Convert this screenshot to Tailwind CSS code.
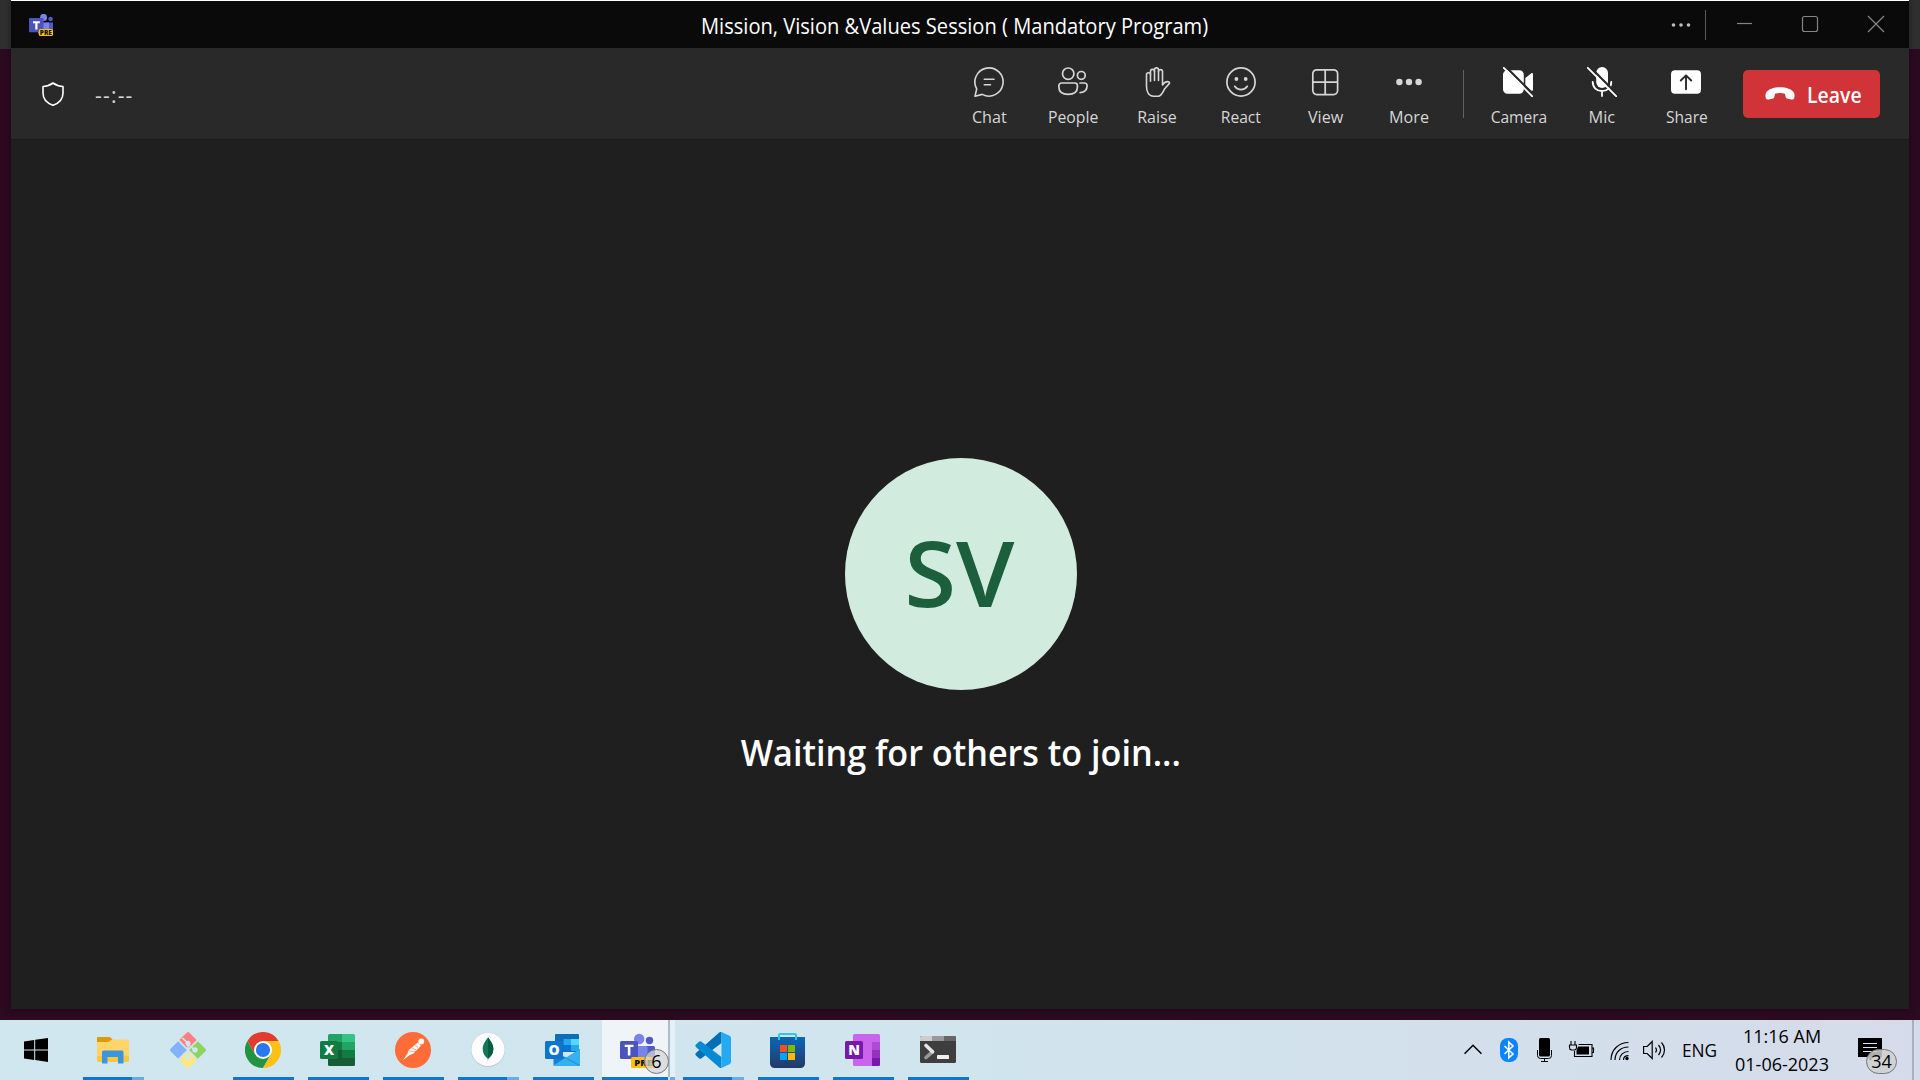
<!DOCTYPE html>
<html lang="en">
<head>
<meta charset="utf-8">
<title>Mission, Vision &amp;Values Session ( Mandatory Program)</title>
<script src="https://cdn.jsdelivr.net/npm/@tailwindcss/browser@4"></script>
</head>
<body class="w-[1920px] h-[1080px] overflow-hidden bg-[#2c0a20] font-['Open_Sans','Noto_Sans',sans-serif] flex flex-col">

<!-- Desktop area with the meeting window -->
<div class="h-[1020px] px-[11px] pb-[11px] shrink-0 bg-linear-to-b from-[#303030] from-[49px] to-[#2c0a20] to-[49px]">
  <main class="h-[1009px] bg-[#1f1f1f] border-t border-white flex flex-col shadow-[0_0_8px_rgba(0,0,0,0.4)]">

    <!-- Title bar -->
    <header class="h-[47px] shrink-0 bg-[#0a0a0a] flex text-white">
      <svg class="w-6 h-[22px] ml-[18px] mt-[13px]" viewBox="0 0 24 22">
        <circle cx="14.6" cy="3.4" r="3.5" fill="#7b83eb"/><circle cx="21.6" cy="5" r="2.3" fill="#5059c9"/>
        <path d="M17 8.5h7v9h-7z" fill="#5059c9"/><path d="M9 8.5h11v11H9z" fill="#7b83eb"/>
        <rect y="4" width="14.5" height="14.3" rx="1" fill="#4b53bc"/>
        <path d="M4 7.2h6.8v2H8.5v6.3H6.3V9.200H4z" fill="#fff"/>
        <rect x="9.800" y="15" width="14.200" height="7" rx="1.500" fill="#ffc200"/>
        <text x="16.900" y="20.900" text-anchor="middle" font-family="Open Sans" font-size="6.500" font-weight="800" fill="#111">PRE</text>
      </svg>
      <h1 class="ml-[648px] pt-0.5 text-[21px] leading-[46px] whitespace-nowrap origin-left scale-x-[0.957]">Mission, Vision &amp;Values Session ( Mandatory Program)</h1>
      <div class="ml-auto flex">
        <svg class="w-[50px] h-[47px] border-box" viewBox="0 0 50 47" fill="#bdbdbd"><circle cx="15.500" cy="24" r="1.800"/><circle cx="23" cy="24" r="1.800"/><circle cx="30.500" cy="24" r="1.800"/><path d="M47 9h1v30h-1z" fill="#5a5a5a"/></svg>
        <svg class="w-[201px] h-[47px]" viewBox="1708 1 201 47" fill="none" stroke="#858585" stroke-width="1.200"><path d="M1737 23.500h15"/><rect x="1802.500" y="16.500" width="15" height="15" rx="2"/><path d="M1868 16l16 16m0-16l-16 16"/></svg>
      </div>
    </header>

    <!-- Meeting toolbar -->
    <nav class="h-[91px] shrink-0 bg-[#292929] flex text-[#d6d6d6]">
      <svg class="w-[22px] h-6 ml-[31px] mt-[34px]" viewBox="0 0 22 24" fill="none" stroke="#fff" stroke-width="1.600" stroke-linejoin="round"><path d="M11 1C8 3.300 4.800 4.300 1 4.500V11c0 6 3.500 10 10 12.300C17.500 21 21 17 21 11V4.500C17.200 4.300 14 3.300 11 1z"/></svg>
      <span class="ml-[31px] mt-[31px] text-[21px] leading-8 tracking-[1.2px]">--:--</span>

      <div class="ml-auto flex text-[17px] leading-6">
        <button class="w-[84px] pt-[19px] flex flex-col items-center">
          <svg class="w-[30px] h-[30px]" viewBox="0 0 30 30" fill="none" stroke="currentColor" stroke-width="1.600" stroke-linecap="round" stroke-linejoin="round"><path d="M8.300 27.400L1 29.200l1.700-7.300A14.100 14.100 0 1 1 8.300 27.400z"/><path d="M10.300 12.200h9.700M10.300 17.800h6.200"/></svg>
          <span class="mt-2 scale-x-[0.95]">Chat</span></button>
        <button class="w-[84px] pt-[19px] flex flex-col items-center">
          <svg class="w-[30px] h-[30px]" viewBox="0 0 30 30" fill="none" stroke="currentColor" stroke-width="1.700" stroke-linecap="round"><circle cx="10.200" cy="6.700" r="5.700"/><circle cx="23.300" cy="8.400" r="3.900"/><path d="M3.500 16h13.300a2.600 2.600 0 0 1 2.600 2.600v1.400c0 5-4 7.300-9.200 7.300S.9 25 .9 20v-1.400A2.600 2.600 0 0 1 3.500 16zM22 16h4.500a2.600 2.600 0 0 1 2.600 2.600c0 4.700-3 7-7 7"/></svg>
          <span class="mt-2 scale-x-[0.93]">People</span></button>
        <button class="w-[84px] pt-[19px] flex flex-col items-center">
          <svg class="w-[30px] h-[30px]" viewBox="0 0 30 30" fill="none" stroke="currentColor" stroke-width="1.600" stroke-linecap="round" stroke-linejoin="round"><path d="M4.500 19V7.800a2 2 0 0 1 4 0V4.400a2 2 0 0 1 4 0V2.900a2 2 0 0 1 4 0v1.700a2 2 0 0 1 4 0V18c1.500-2.500 3.500-3.600 6-3.300.9.200 1.200 1 .9 1.700l-4.700 5.300c-2 3.900-3.200 7.500-6.500 7.500H11.500C6.500 29.200 4.500 24.500 4.500 19z"/><path d="M8.500 7.800v6.500M12.500 4.400v9M16.500 4.400v9"/></svg>
          <span class="mt-2 scale-x-[0.94]">Raise</span></button>
        <button class="w-[84px] pt-[19px] flex flex-col items-center">
          <svg class="w-[30px] h-[30px]" viewBox="0 0 30 30" fill="none" stroke="currentColor" stroke-width="1.700" stroke-linecap="round"><circle cx="15" cy="15" r="14.100"/><path d="M8.700 19.300c3.200 4.500 9.400 4.500 12.600 0"/><circle cx="10.400" cy="12" r="1.900" fill="currentColor" stroke="none"/><circle cx="19.700" cy="12" r="1.900" fill="currentColor" stroke="none"/></svg>
          <span class="mt-2 scale-x-[0.92]">React</span></button>
        <button class="w-[84px] pt-[19px] flex flex-col items-center">
          <svg class="w-[30px] h-[30px]" viewBox="0 0 30 30" fill="none" stroke="currentColor" stroke-width="1.700"><rect x="2.800" y="2.800" width="24.800" height="24.800" rx="4"/><path d="M15.200 2.800v24.800M2.800 15.200h24.800"/></svg>
          <span class="mt-2 ml-px scale-x-[0.95]">View</span></button>
        <button class="w-[84px] pt-[19px] flex flex-col items-center">
          <svg class="w-[30px] h-[30px]" viewBox="0 0 30 30" fill="currentColor"><circle cx="5.400" cy="15" r="3.200"/><circle cx="15" cy="15" r="3.200"/><circle cx="24.600" cy="15" r="3.200"/></svg>
          <span class="mt-2 scale-x-[0.95]">More</span></button>
        <div class="w-px h-12 mt-[22px] ml-3 mr-3 bg-[#616161]"></div>
        <button class="w-[84px] pt-[19px] flex flex-col items-center">
          <svg class="w-[30px] h-[30px]" viewBox="0 0 30 30" fill="#fff"><path d="M4.500 3.300h11.800a4.500 4.500 0 0 1 4.500 4.500v14.500a4.500 4.500 0 0 1-4.500 4.500H4.500A4.500 4.500 0 0 1 0 22.300V7.800a4.500 4.500 0 0 1 4.500-4.500zM22.300 11l5.800-4.600c.9-.6 1.900-.2 1.900.8v15.600c0 1-1 1.400-1.900.8L22.300 19z"/><path d="M1.500-1.500l30 30" stroke="#292929" stroke-width="2.200"/><path d="M.8.800l28.600 28.600" stroke="#fff" stroke-width="1.900" stroke-linecap="round"/></svg>
          <span class="mt-2 ml-px scale-x-[0.915]">Camera</span></button>
        <button class="w-[84px] pt-[19px] flex flex-col items-center">
          <svg class="w-[30px] h-[30px]" viewBox="0 0 30 30" fill="none" stroke="#fff" stroke-width="1.800" stroke-linecap="round"><rect x="9.200" y="0" width="11.800" height="21" rx="5.900" fill="#fff" stroke="none"/><path d="M5.700 14.800c0 5.800 4 9.200 9.300 9.200s9.300-3.400 9.300-9.200M15 24v5"/><path d="M1.500-1.500l30 30" stroke="#292929" stroke-width="2.200"/><path d="M.8.800l28.600 28.600"/></svg>
          <span class="mt-2 scale-x-[0.96]">Mic</span></button>
        <button class="w-[84px] pt-[19px] flex flex-col items-center">
          <svg class="w-[30px] h-[30px]" viewBox="0 0 30 30"><rect y="3.300" width="30" height="23.500" rx="4" fill="#fff"/><path d="M15 22.200V8.500M9.800 13.500L15 8.300l5.200 5.200" fill="none" stroke="#292929" stroke-width="1.900" stroke-linecap="round" stroke-linejoin="round"/></svg>
          <span class="mt-2 ml-px scale-x-[0.915]">Share</span></button>
      </div>
      <button class="w-[137px] h-12 ml-[15px] mr-[29px] mt-[22px] rounded-[5px] bg-[#d13438] text-white text-[21px] font-semibold flex items-center pl-[22px]">
        <svg class="w-[30px] h-[13px] -mt-0.5" viewBox="0 0 30 13" fill="#fff"><path d="M15 .3c6.500 0 11.500 2 13.700 5 1.200 1.800.9 4 .5 5.700-.4 1.200-1.500 1.700-2.800 1.500l-3.700-.7c-1.200-.3-1.900-1-2.100-2.100l-.6-2.900c-3.200-1.200-6.800-1.200-10 0l-.6 2.900c-.2 1.100-.9 1.800-2.100 2.100l-3.700.7C2.300 12.700 1.200 12.200.8 11 .4 9.300.1 7.100 1.300 5.300 3.500 2.300 8.500.3 15 .3z"/></svg>
        <span class="ml-3 mt-1 origin-left scale-x-[0.925]">Leave</span>
      </button>
    </nav>

    <!-- Stage -->
    <section class="grow flex flex-col items-center pt-[318px] border-t border-[#1b1b1b]">
      <div class="w-[232px] h-[232px] rounded-full bg-[#d1ebde] text-[#1c5f3c] text-[91px] font-semibold flex items-center justify-center ml-0.5 pb-1 pr-1"><span class="scale-x-[1.03]">SV</span></div>
      <p class="mt-9 ml-0.5 text-[36px] leading-[54px] font-semibold text-white whitespace-nowrap scale-x-[0.949]">Waiting for others to join...</p>
    </section>
  </main>
</div>

<!-- Taskbar -->
<footer class="h-[60px] shrink-0 bg-linear-to-r from-[#d1e7ef] via-[#d0e5ee] to-[#d5dbea] flex text-black">
  <div class="w-[83px] pl-6 pt-[18px]"><svg class="w-6 h-6" viewBox="0 0 24 24"><path d="M0 3.400L10.200 2v9.400H0zM11.200 1.800L24 0v11.400H11.200zM0 12.400h10.200v9.500L0 20.500zM11.200 12.400H24V24l-12.800-1.900z"/></svg></div>
  <div class="flex gap-[14px]">
    <div class="w-[61px] h-[60px]">
      <svg class="w-9 h-9 ml-3 mt-3 mb-[9px]" viewBox="0 0 36 36"><path d="M2 5.500a1 1 0 0 1 1-.500h12l2.500 2.500v4H2z" fill="#dd9a06"/><path d="M2 10h11.500l3.500-2.500h15.500A1.500 1.500 0 0 1 34 9v19.500a1.500 1.500 0 0 1-1.500 1.500h-29A1.500 1.500 0 0 1 2 28.500z" fill="#ffd468"/><path d="M2 24h32v4.500a1.500 1.500 0 0 1-1.500 1.500h-29A1.500 1.500 0 0 1 2 28.500z" fill="#fcc63f"/><path d="M7 30.500V20a1.500 1.500 0 0 1 1.500-1.500h18.500a1.500 1.500 0 0 1 1.500 1.500v11.500h-5.500V25H12.500v6.500H7z" fill="#3a96dd"/></svg>
      <div class="w-full h-[3px] flex"><i class="w-[49px] bg-[#0878d8]"></i><i class="grow bg-[#67ace5]"></i></div>
    </div>
    <div class="w-[61px] h-[60px]">
      <svg class="w-9 h-9 ml-3 mt-3" viewBox="0 0 36 36"><path d="M16.600.8a2 2 0 0 1 2.800 0l7.300 7.300-8.700 8.700L9.300 8.100z" fill="#ff8080"/><path d="M8.100 9.300L16.800 18l-8.700 8.700-7.500-7.500a1.700 1.700 0 0 1 0-2.400z" fill="#80b3ff"/><path d="M27.900 9.300l7.500 7.500a1.700 1.700 0 0 1 0 2.400l-7.500 7.500L19.200 18z" fill="#8dd35f"/><path d="M18 19.200l8.700 8.700-7.300 7.300a2 2 0 0 1-2.800 0l-7.300-7.300z" fill="#ffe680"/><path d="M12.500 6l5.500 5.500V27M18 12l6.500 6" fill="none" stroke="#d1e7ef" stroke-width="1.600"/><g fill="#d1e7ef"><circle cx="18" cy="11.300" r="2.500"/><circle cx="25" cy="18" r="2.700"/><circle cx="18" cy="25.500" r="2.500"/></g></svg>
    </div>
    <div class="w-[61px] h-[60px]">
      <svg class="w-9 h-9 ml-3 mt-3 mb-[9px]" viewBox="0 0 36 36"><path d="M2.400 9A18 18 0 0 1 33.600 9H18l-7.800 13.500z" fill="#e33b2e"/><path d="M2.400 9A18 18 0 0 0 18 36l7.800-13.500H10.200z" fill="#229342"/><path d="M33.600 9A18 18 0 0 1 18 36l7.800-13.500L25.800 13.500 18 9z" fill="#fbc116"/><circle cx="18" cy="18" r="9" fill="#fff"/><circle cx="18" cy="18" r="7.100" fill="#2a78ee"/></svg>
      <div class="w-full h-[3px] bg-[#0878d8]"></div>
    </div>
    <div class="w-[61px] h-[60px]">
      <svg class="w-9 h-9 ml-3 mt-3 mb-[9px]" viewBox="1 0 36 36"><path d="M9 3.500A1.500 1.500 0 0 1 10.500 2H23v8H9z" fill="#21a366"/><path d="M23 2h11.500A1.500 1.500 0 0 1 36 3.500V10H23z" fill="#33c481"/><path d="M9 10h14v8H9z" fill="#107c41"/><path d="M23 10h13v8H23z" fill="#21a366"/><path d="M9 18h14v8H9z" fill="#185c37"/><path d="M23 18h13v8H23z" fill="#107c41"/><path d="M9 26h27v6.500a1.500 1.500 0 0 1-1.500 1.500h-24A1.500 1.500 0 0 1 9 32.500z" fill="#185c37"/><rect x="1" y="9" width="18" height="18" rx="1.500" fill="#107c41"/><text x="10" y="23" text-anchor="middle" font-family="Open Sans" font-size="14" font-weight="800" fill="#fff">X</text></svg>
      <div class="w-full h-[3px] bg-[#0878d8]"></div>
    </div>
    <div class="w-[61px] h-[60px]">
      <svg class="w-9 h-9 ml-3 mt-3 mb-[9px]" viewBox="0 0 36 36"><circle cx="18" cy="18" r="18" fill="#ff6c37"/><circle cx="26.300" cy="9.500" r="2.900" fill="#fff"/><path d="M22.800 10.500l3 3.200-7.500 8-4 1.600-6.300 4.900 4.300-6.200 1.500-4z" fill="#fff"/><path d="M14 19l7 .5M17 16l4 2M20 13l3 2.500" stroke="#ff6c37" stroke-width=".6"/></svg>
      <div class="w-full h-[3px] bg-[#0878d8]"></div>
    </div>
    <div class="w-[61px] h-[60px]">
      <svg class="w-9 h-9 ml-3 mt-3 mb-[9px]" viewBox="0 0 36 36"><circle cx="18" cy="18" r="17" fill="#b5c8cf"/><circle cx="18" cy="17.500" r="16.600" fill="#fdfdfd"/><path d="M18 5.500c4 5 5.300 8 5.300 11.500 0 4.500-2.300 7.500-4.900 9.500l-.4 2.500-.4-2.500c-2.600-2-4.900-5-4.900-9.500 0-3.500 1.300-6.500 5.300-11.500z" fill="#10795a"/><path d="M18 5.500c4 5 5.300 8 5.300 11.500 0 4.500-2.300 7.500-5.300 9.500z" fill="#0a5a42"/></svg>
      <div class="w-full h-[3px] flex"><i class="w-[49px] bg-[#0878d8]"></i><i class="grow bg-[#67ace5]"></i></div>
    </div>
    <div class="w-[61px] h-[60px]">
      <svg class="w-9 h-9 ml-3 mt-3 mb-[9px]" viewBox="1 0 36 36"><path d="M12 2h22a1 1 0 0 1 1 1v17H11V3a1 1 0 0 1 1-1z" fill="#0f6cbd"/><path d="M19.500 7H27v6h-7.500z" fill="#28a8ea"/><path d="M27 7h8v6h-8z" fill="#50d9ff"/><path d="M19.500 13H27v6h-7.500z" fill="#0078d4"/><path d="M27 13h8v6h-8z" fill="#28a8ea"/><path d="M9.500 19l13 7L36 17v15.500a1.500 1.500 0 0 1-1.500 1.500H11a1.500 1.500 0 0 1-1.500-1.500z" fill="#1681d8"/><path d="M36 17v15.500a1.500 1.500 0 0 1-1.500 1.500H11c-.7 0-1.200-.3-1.500-.8z" fill="#35b1ee"/><path d="M20 25l15.500 8.500" stroke="#178bdd"/><rect x="1" y="9" width="18" height="18" rx="1.500" fill="#0f74cc"/><text x="10" y="23" text-anchor="middle" font-family="Open Sans" font-size="14" font-weight="800" fill="#fff">O</text></svg>
      <div class="w-full h-[3px] bg-[#0878d8]"></div>
    </div>
    <!-- Active app -->
    <div class="w-[73px] h-[60px] -ml-[6px] -mr-[6px] flex">
      <div class="relative w-[66px] bg-[#eef4f8] flex flex-col justify-between">
        <svg class="w-[42px] h-9 mt-3 ml-[17px]" viewBox="0 0 42 36"><circle cx="20.200" cy="7" r="5.200" fill="#7b83eb"/><circle cx="30.500" cy="8.500" r="3.700" fill="#5059c9"/><path d="M25 14h9.500a1.500 1.500 0 0 1 1.500 1.500V22c0 3-2.500 5-5 5h-6z" fill="#5059c9"/><path d="M12 14h15a1.500 1.500 0 0 1 1.500 1.500V24c0 5-4 8-8 8s-8.500-3-8.500-8z" fill="#7b83eb"/><rect x="1" y="9" width="18" height="18" rx="1.500" fill="#4b53bc"/><path d="M5.700 12.800h8.800V15h-3.100v8.500H8.800V15H5.700z" fill="#fff"/><rect x="12" y="25" width="24" height="11" rx="1.500" fill="#ffc200"/><text x="15.300" y="34" font-family="Open Sans" font-size="9.500" font-weight="800" fill="#111">PRE</text></svg>
        <div class="w-full h-[3px] bg-[#0878d8]"></div>
        <span class="absolute left-[42px] top-[29px] w-[25px] h-[25px] rounded-full border border-[#777] bg-[#d5d5d5]/75 text-[18px] leading-[23px] text-center">6</span>
      </div>
      <div class="w-0.5 h-[57px] bg-[#a9bfcb]"></div>
      <div class="w-[5px] bg-[#e5eff5] flex items-end"><i class="w-full h-[3px] bg-[#67ace5]"></i></div>
    </div>
    <div class="w-[61px] h-[60px]">
      <svg class="w-9 h-9 ml-3 mt-3 mb-[9px]" viewBox="0 0 36 36"><path d="M26.500 0v11L6.500 26.300a2 2 0 0 1-2.500 0l-2.800-2.500a2 2 0 0 1 0-3L24 .7A3 3 0 0 1 26.500 0z" fill="#0070b5"/><path d="M26.500 36V25L6.500 9.700a2 2 0 0 0-2.500 0L1.200 12.200a2 2 0 0 0 0 3L24 35.300a3 3 0 0 0 2.500.7z" fill="#0489d4"/><path d="M26.500 0l8 3.800A2.500 2.500 0 0 1 36 6v24a2.500 2.500 0 0 1-1.500 2.200l-8 3.800z" fill="#25a9f2"/></svg>
      <div class="w-full h-[3px] flex"><i class="w-[49px] bg-[#0878d8]"></i><i class="grow bg-[#67ace5]"></i></div>
    </div>
    <div class="w-[61px] h-[60px]">
      <svg class="w-9 h-9 ml-3 mt-3 mb-[9px]" viewBox="0 0 36 36"><defs><linearGradient id="store" x2="0" y2="1"><stop stop-color="#0b66b8"/><stop offset="1" stop-color="#223a66"/></linearGradient></defs><path d="M0 5h35v26.500a4.500 4.500 0 0 1-4.500 4.500h-26A4.500 4.500 0 0 1 0 31.500z" fill="url(#store)"/><path d="M9 8V3A1 1 0 0 1 10 2h15a1 1 0 0 1 1 1v5" fill="none" stroke="#2ec4f5" stroke-width="2"/><path fill="#f25022" d="M10 13h7v7h-7z"/><path fill="#7fba00" d="M18 13h7v7h-7z"/><path fill="#00a4ef" d="M10 21h7v7h-7z"/><path fill="#ffb900" d="M18 21h7v7h-7z"/></svg>
      <div class="w-full h-[3px] bg-[#0878d8]"></div>
    </div>
    <div class="w-[61px] h-[60px]">
      <svg class="w-9 h-9 ml-3 mt-3 mb-[9px]" viewBox="0.5 0 36 36"><rect x="8.500" y="2" width="27" height="32" rx="1.500" fill="#ca64ea"/><path d="M27.500 10h8v8h-8z" fill="#ae4bd5"/><path d="M27.500 18h8v8h-8z" fill="#9332bf"/><path d="M27.500 26h8v6.500a1.500 1.500 0 0 1-1.500 1.500h-6.500z" fill="#7719aa"/><rect x=".5" y="9" width="18" height="18" rx="1.500" fill="#7719aa"/><text x="9.500" y="23" text-anchor="middle" font-family="Open Sans" font-size="14" font-weight="800" fill="#fff">N</text></svg>
      <div class="w-full h-[3px] bg-[#0878d8]"></div>
    </div>
    <div class="w-[61px] h-[60px]">
      <svg class="w-9 h-9 ml-3 mt-3 mb-[9px]" viewBox="0 0 36 36"><rect y="4" width="36" height="27" rx="1.500" fill="#3e3e3e"/><path d="M0 9V5.500A1.500 1.500 0 0 1 1.500 4H12v5z" fill="#ccc"/><path d="M12 4h12v5H12z" fill="#999"/><path d="M24 4h10.500A1.500 1.500 0 0 1 36 5.500V9H24z" fill="#666"/><path d="M12.500 19.800L6 25.500" stroke="#999" stroke-width="3.600" stroke-linecap="round"/><path d="M6 13.500l6.500 6.300" stroke="#e6e6e6" stroke-width="3.600" stroke-linecap="round"/><rect x="17" y="23" width="12" height="4" rx=".6" fill="#f0f0f0"/></svg>
      <div class="w-full h-[3px] bg-[#0878d8]"></div>
    </div>
  </div>

  <!-- System tray -->
  <div class="ml-auto flex items-start">
    <svg class="w-[18px] h-6 mt-[18px] mr-[18px]" viewBox="0 0 18 24" fill="none" stroke="#000" stroke-width="1.500"><path d="M.5 15.800L9 7.200l8.500 8.600"/></svg>
    <svg class="w-[18px] h-6 mt-[18px] mr-[19px]" viewBox="0 0 18 24"><rect width="18" height="24" rx="8" fill="#0a84ff"/><path d="M4.500 8l8.500 8-4.200 4V4L13 8l-8.500 8" fill="none" stroke="#fff" stroke-width="1.600"/></svg>
    <svg class="w-[15px] h-6 mt-[18px] mr-[18px]" viewBox="0 0 15 24"><rect x="2" y="0" width="11" height="18.500" rx="1.500"/><path d="M.5 12v5.500a3 3 0 0 0 3 3h8a3 3 0 0 0 3-3V12M7.500 20.500v3M4 23.500h7" fill="none" stroke="#000"/></svg>
    <svg class="w-6 h-6 mt-[18px] mr-4 overflow-visible" viewBox="0 0 24 24" fill="none" stroke="#000" stroke-width="1.100"><path d="M8.500 6.500H22v12H4.500V13M22 10h1.500v4.500H22M-1 7h7.500v2.500A2.500 2.500 0 0 1 4 12h-2.500A2.500 2.500 0 0 1-.5 9.500V7M1 7V3M5 7V3"/><path d="M8 8.500h11v8H6.500v-4z" fill="#000" stroke="none"/></svg>
    <svg class="w-[19px] h-6 mt-[18px] mr-[14px]" viewBox="0 0 19 24" fill="none" stroke="#000" stroke-width="1.200"><path d="M1 22C1 12 8.500 4.500 18.500 4.500M5 22C5 14 11 9 18.500 9M9.500 22c0-5 4-8.500 9-8.500M13.500 22c0-2.500 2-4.300 5-4.300"/><circle cx="17" cy="20.500" r="1.700" fill="#000" stroke="none"/></svg>
    <svg class="w-6 h-6 mt-[18px] mr-[15px]" viewBox="0 0 24 24" fill="none" stroke="#000" stroke-width="1.200"><path d="M.6 8.500h3.600l5-5v17l-5-5H.6zM12.500 9.500c1.200 1.500 1.200 3.500 0 5M15.500 7c2.500 3 2.500 7 0 10M18.500 4.500c4 4.500 4 10.500 0 15"/></svg>
    <span class="mt-[18px] w-[37px] text-[18px] leading-6 origin-left scale-x-[0.96]">ENG</span>
    <div class="w-[94px] ml-4 mt-0.5 text-[18px] leading-7 text-center whitespace-nowrap"><div>11:16 AM</div><div>01-06-2023</div></div>
    <div class="relative w-6 h-6 ml-[29px] mt-[18px]">
      <svg class="w-6 h-6" viewBox="0 0 24 24"><path d="M0 0h24v19H16l-4 4-2-4H0z"/><path d="M5 5.500h14M5 9.500h14M5 13.500h14" stroke="#dde5ee"/></svg>
      <span class="absolute left-[8px] top-[11px] w-[31px] h-[25px] rounded-full border border-[#777] bg-[#d0d0d0]/85 text-[18px] leading-[23px] text-center">34</span>
    </div>
    <div class="w-0.5 h-[60px] ml-[30px] mr-1.5 bg-[#a7b0c0]"></div>
  </div>
</footer>
</body>
</html>
